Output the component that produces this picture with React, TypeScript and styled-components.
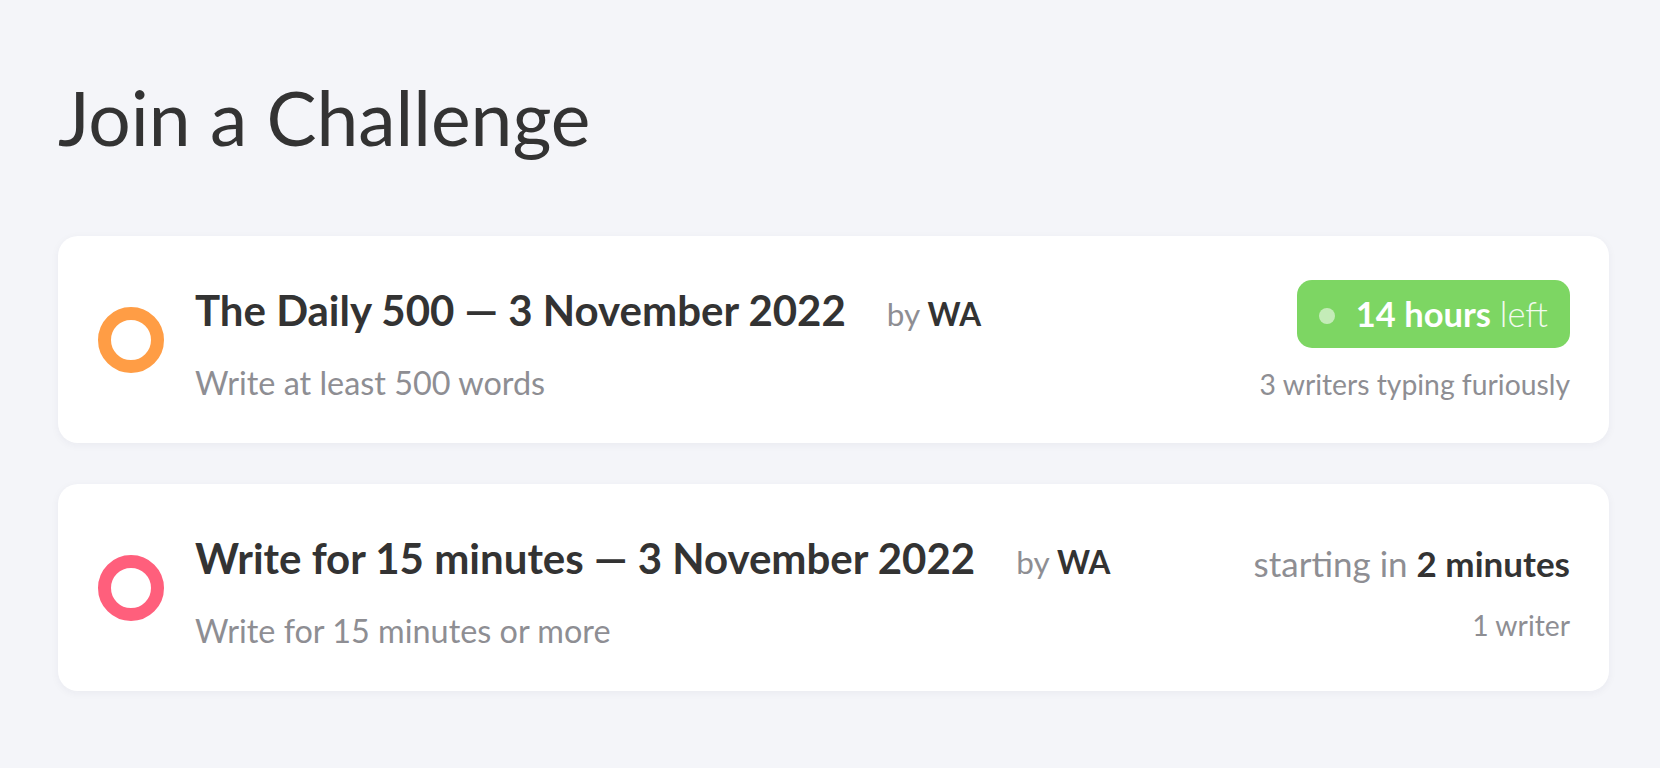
import React from "react";
import styled, { createGlobalStyle } from "styled-components";

const Global = createGlobalStyle`
  html, body {
    margin: 0;
    padding: 0;
    background: #f4f5f9;
    font-family: Lato, "Noto Sans", sans-serif;
    color: #333333;
  }
  * { box-sizing: border-box; }
`;

const Page = styled.main`
  padding: 81px 51px 40px 58px;
  min-height: 768px;
`;

const Heading = styled.h1`
  margin: 0 0 83px 0;
  font-size: 75px;
  line-height: 72px;
  font-weight: 400;
  color: #333333;
`;

const List = styled.div`
  display: flex;
  flex-direction: column;
  gap: 41px;
`;

const Card = styled.div`
  height: 207px;
  background: #ffffff;
  border-radius: 20px;
  box-shadow: 0 2px 8px rgba(30, 40, 80, 0.05);
  display: flex;
  align-items: center;
  padding: 0 39px 0 40px;
`;

const Ring = styled.div<{ $color: string }>`
  width: 66px;
  height: 66px;
  border-radius: 50%;
  border: 13px solid ${(p) => p.$color};
  flex-shrink: 0;
  margin-right: 31px;
`;

const Info = styled.div`
  flex: 1;
  display: flex;
  flex-direction: column;
  padding-top: 8px;
`;

const TitleRow = styled.div`
  display: flex;
  align-items: baseline;
  gap: 41px;
  line-height: 48px;
`;

const Title = styled.span`
  font-size: 42px;
  font-weight: 700;
  color: #333333;
`;

const Author = styled.span`
  font-size: 31.5px;
  color: #8e8e93;
  b {
    font-weight: 700;
    color: #333333;
  }
`;

const Subtitle = styled.div`
  margin-top: 27px;
  font-size: 32.4px;
  line-height: 36px;
  color: #8e8e93;
`;

const Side = styled.div<{ $shift: number }>`
  display: flex;
  flex-direction: column;
  align-items: flex-end;
  padding-top: ${(p) => p.$shift}px;
`;

const Badge = styled.div`
  height: 68px;
  border-radius: 15px;
  background: #7dd663;
  color: #ffffff;
  display: flex;
  align-items: center;
  padding: 0 22px;
  font-size: 34.5px;
  gap: 21px;
  b { font-weight: 700; }
  span { font-weight: 300; opacity: 0.9; }
`;

const Dot = styled.i`
  width: 16px;
  height: 16px;
  border-radius: 50%;
  background: rgba(255, 255, 255, 0.55);
  margin-top: 4px;
`;

const Status = styled.div`
  font-size: 35px;
  line-height: 48px;
  color: #8e8e93;
  b { font-weight: 700; color: #333333; }
`;

const Caption = styled.div<{ $gap: number }>`
  margin-top: ${(p) => p.$gap}px;
  font-size: 28.3px;
  line-height: 32px;
  color: #8e8e93;
`;

export default function App() {
  return (
    <>
      <Global />
      <Page>
        <Heading>Join a Challenge</Heading>
        <List>
          <Card>
            <Ring $color="#ff9d45" />
            <Info>
              <TitleRow>
                <Title>The Daily 500 — 3 November 2022</Title>
                <Author>
                  by <b>WA</b>
                </Author>
              </TitleRow>
              <Subtitle>Write at least 500 words</Subtitle>
            </Info>
            <Side $shift={0}>
              <Badge>
                <Dot />
                <div>
                  <b>14 hours</b> <span>left</span>
                </div>
              </Badge>
              <Caption $gap={20}>3 writers typing furiously</Caption>
            </Side>
          </Card>
          <Card>
            <Ring $color="#ff5f7c" />
            <Info>
              <TitleRow>
                <Title>Write for 15 minutes — 3 November 2022</Title>
                <Author>
                  by <b>WA</b>
                </Author>
              </TitleRow>
              <Subtitle>Write for 15 minutes or more</Subtitle>
            </Info>
            <Side $shift={4}>
              <Status>
                starting in <b>2 minutes</b>
              </Status>
              <Caption $gap={22}>1 writer</Caption>
            </Side>
          </Card>
        </List>
      </Page>
    </>
  );
}
